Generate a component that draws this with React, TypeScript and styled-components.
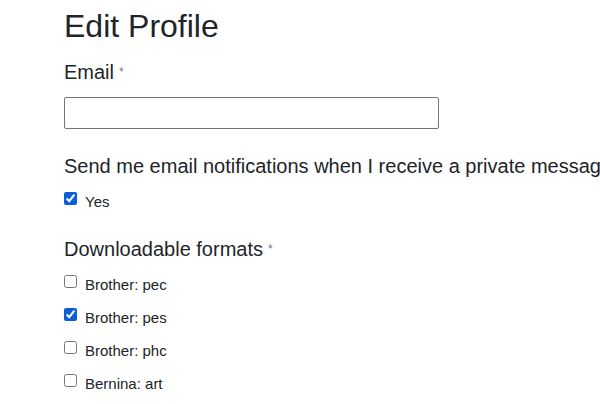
import React, { useState } from 'react';
import styled, { createGlobalStyle } from 'styled-components';

const GlobalStyle = createGlobalStyle`
  body {
    margin: 0;
    background: #fff;
    font-family: "Liberation Sans", Arial, sans-serif;
    color: #212529;
    overflow: hidden;
  }
`;

const Page = styled.div`
  padding: 0 0 0 64px;
  width: 600px;
  box-sizing: border-box;
  white-space: nowrap;
`;

const Title = styled.h1`
  font-size: 32px;
  font-weight: 400;
  line-height: 39px;
  margin: 7px 0 14px;
`;

const Field = styled.div<{ $after: number }>`
  margin-bottom: ${p => p.$after}px;
`;

const Label = styled.label<{ $gap: number }>`
  display: block;
  font-size: 20px;
  line-height: 24px;
  margin-bottom: ${p => p.$gap}px;
`;

const Required = styled.span`
  color: #6c7a91;
  font-size: 12px;
  margin-left: 5px;
  vertical-align: 3px;
`;

const TextInput = styled.input`
  display: block;
  width: 375px;
  height: 32px;
  box-sizing: border-box;
  border: 1px solid #767676;
  border-radius: 2px;
  padding: 4px 8px;
  font-size: 15px;
  font-family: inherit;
`;

const CheckRow = styled.label`
  display: flex;
  align-items: center;
  font-size: 15px;
  height: 33px;
`;

const CheckText = styled.span`
  margin-top: 5px;
`;

const Box = styled.input`
  margin: 0 8px 0 0;
  width: 13px;
  height: 13px;
  accent-color: #0b5ed7;
`;

const formats = [
  { name: 'Brother: pec', checked: false },
  { name: 'Brother: pes', checked: true },
  { name: 'Brother: phc', checked: false },
  { name: 'Bernina: art', checked: false },
];

const App = () => {
  const [notify, setNotify] = useState<boolean>(true);
  const [picked, setPicked] = useState<boolean[]>(formats.map(f => f.checked));

  return (
    <Page>
      <GlobalStyle />
      <Title>Edit Profile</Title>
      <Field $after={25}>
        <Label $gap={13}>Email<Required>*</Required></Label>
        <TextInput type="email" />
      </Field>
      <Field $after={22}>
        <Label $gap={4}>Send me email notifications when I receive a private message</Label>
        <CheckRow>
          <Box type="checkbox" checked={notify} onChange={() => setNotify(!notify)} />
          <CheckText>Yes</CheckText>
        </CheckRow>
      </Field>
      <Field $after={0}>
        <Label $gap={4}>Downloadable formats<Required>*</Required></Label>
        {formats.map((f, i) => (
          <CheckRow key={f.name}>
            <Box
              type="checkbox"
              checked={picked[i]}
              onChange={() => setPicked(picked.map((p, j) => (j === i ? !p : p)))}
            />
            <CheckText>{f.name}</CheckText>
          </CheckRow>
        ))}
      </Field>
    </Page>
  );
};

export default App;
